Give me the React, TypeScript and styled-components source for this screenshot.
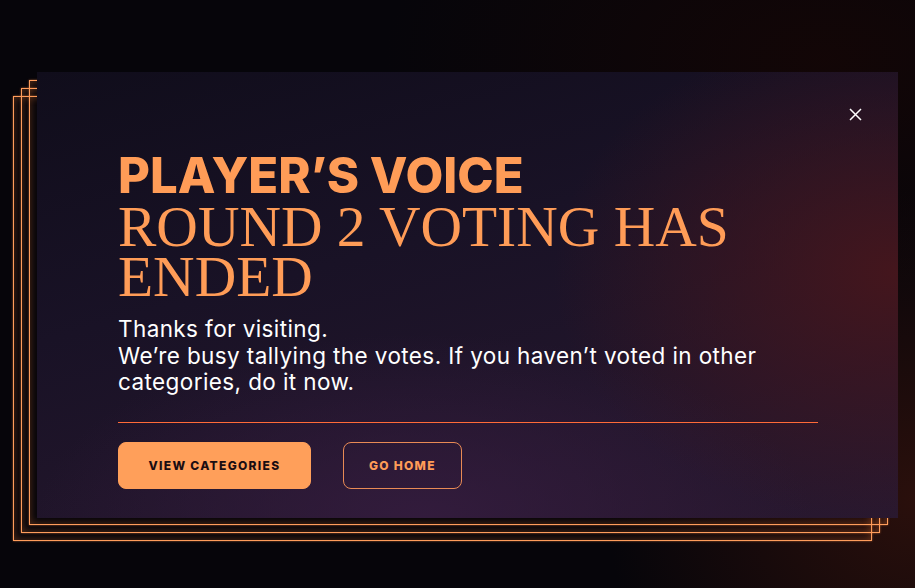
import React from "react";
import styled, { createGlobalStyle } from "styled-components";

const Global = createGlobalStyle`
  html, body { margin: 0; padding: 0; background: #06050a; }
  * { box-sizing: border-box; }
`;

const Page = styled.main`
  width: 915px;
  height: 588px;
  overflow: hidden;
  display: flex;
  align-items: flex-start;
  padding: 72px 0 0 37px;
  background:
    radial-gradient(ellipse 45% 70% at 100% 85%, rgba(44, 16, 12, 0.95), transparent 75%),
    radial-gradient(ellipse 60% 50% at 90% 10%, rgba(20, 6, 6, 0.9), transparent 80%),
    #06050a;
`;

const Stack = styled.div`
  position: relative;
  display: flex;
`;

const Frame = styled.div<{ $step: number }>`
  position: absolute;
  left: ${(p) => -8 * p.$step}px;
  top: ${(p) => 8 * p.$step}px;
  width: 859px;
  height: 445px;
  border: 1px solid #ff9d5c;
  box-shadow: 0 0 2px rgba(255, 140, 70, 0.6), inset 0 0 9px rgba(255, 135, 60, 0.32);
  pointer-events: none;
`;

const Card = styled.section`
  position: relative;
  width: 861px;
  height: 446px;
  display: flex;
  flex-direction: column;
  padding: 78px 80px 0 81px;
  background:
    radial-gradient(ellipse 50% 70% at 100% 45%, rgba(70, 22, 28, 0.95), transparent 80%),
    radial-gradient(ellipse 60% 55% at 45% 100%, rgba(52, 28, 62, 0.9), transparent 75%),
    linear-gradient(165deg, #100d1b 0%, #191226 40%, #29182f 100%);
`;

const Close = styled.button`
  position: absolute;
  top: 35px;
  right: 36px;
  width: 14px;
  height: 14px;
  padding: 0;
  border: 0;
  background: transparent;
  display: flex;
  align-items: center;
  justify-content: center;
  cursor: pointer;
`;

const Heading = styled.header`
  display: flex;
  flex-direction: column;
`;

const Kicker = styled.h1`
  margin: 0;
  font-family: Inter, "Noto Sans", sans-serif;
  font-weight: 800;
  font-size: 49px;
  line-height: 52px;
  color: #ff9c57;
`;

const Headline = styled.h2`
  margin: 0;
  font-family: "Liberation Serif", "Times New Roman", serif;
  font-weight: 400;
  font-size: 57.5px;
  line-height: 50px;
  text-transform: uppercase;
  color: #ff9c57;
  max-width: 640px;
`;

const Body = styled.p`
  margin: 14px 0 0;
  font-family: Inter, "Noto Sans", sans-serif;
  font-size: 22.5px;
  line-height: 26.5px;
  letter-spacing: 0.4px;
  color: #ffffff;
`;

const Divider = styled.div`
  margin-top: 26px;
  height: 1px;
  background: #ff6a38;
`;

const Actions = styled.div`
  display: flex;
  gap: 32px;
  margin-top: 19px;
`;

const Button = styled.button<{ $primary?: boolean; $pad: number }>`
  height: 47px;
  padding: 0 ${(p) => p.$pad}px;
  border-radius: 8px;
  font-family: Inter, "Noto Sans", sans-serif;
  font-weight: 800;
  font-size: 12px;
  letter-spacing: 1.3px;
  text-transform: uppercase;
  cursor: pointer;
  border: 1px solid ${(p) => (p.$primary ? "#ff9f5a" : "#e88a55")};
  background: ${(p) => (p.$primary ? "#ff9f5a" : "transparent")};
  color: ${(p) => (p.$primary ? "#1a0d12" : "#ff9c57")};
`;

export default function App() {
  return (
    <>
      <Global />
      <Page>
        <Stack>
          <Frame $step={3} />
          <Frame $step={2} />
          <Frame $step={1} />
          <Card>
            <Close aria-label="Close">
              <svg width="13" height="13" viewBox="0 0 13 13">
                <path d="M1 1 L12 12 M12 1 L1 12" stroke="#ffffff" strokeWidth="1.5" />
              </svg>
            </Close>
            <Heading>
              <Kicker>PLAYER’S VOICE</Kicker>
              <Headline>Round 2 Voting has ended</Headline>
            </Heading>
            <Body>
              Thanks for visiting.
              <br />
              We’re busy tallying the votes. If you haven’t voted in other categories, do it now.
            </Body>
            <Divider />
            <Actions>
              <Button $primary $pad={29.5}>View categories</Button>
              <Button $pad={25}>Go home</Button>
            </Actions>
          </Card>
        </Stack>
      </Page>
    </>
  );
}
